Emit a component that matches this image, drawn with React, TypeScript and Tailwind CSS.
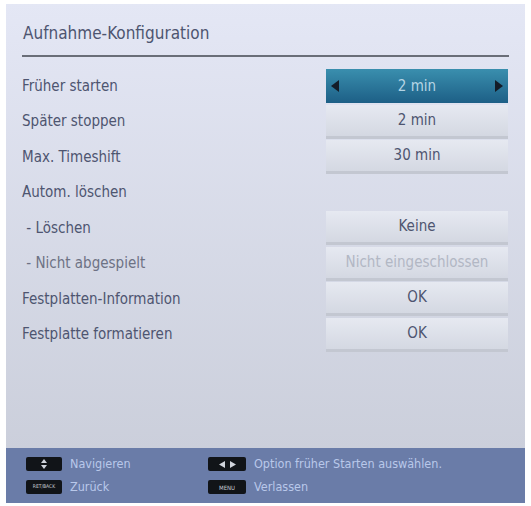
import React from "react";

const font = { fontFamily: '"DejaVu Sans Condensed", "Liberation Sans Narrow", "Liberation Sans", sans-serif' };

function Tri({ dir }: { dir: "l" | "r" }) {
  return (
    <svg width="8" height="12" viewBox="0 0 8 12">
      {dir === "l" ? <polygon points="8,0 0,6 8,12" fill="#141c28" /> : <polygon points="0,0 8,6 0,12" fill="#141c28" />}
    </svg>
  );
}

const rows: { label: string; value?: string; sel?: boolean; dim?: boolean; labelDim?: boolean }[] = [
  { label: "Früher starten", value: "2 min", sel: true },
  { label: "Später stoppen", value: "2 min" },
  { label: "Max. Timeshift", value: "30 min" },
  { label: "Autom. löschen" },
  { label: " - Löschen", value: "Keine" },
  { label: " - Nicht abgespielt", value: "Nicht eingeschlossen", dim: true, labelDim: true },
  { label: "Festplatten-Information", value: "OK" },
  { label: "Festplatte formatieren", value: "OK" },
];

export default function App() {
  return (
    <div className="w-[531px] h-[506px] bg-white pt-[4px] pl-[6px] pr-[6px] pb-[3px]" style={font}>
      <div className="w-full h-full flex flex-col bg-gradient-to-b from-[#e4e7f5] to-[#c8ccd8]">
        <div className="px-[16px] pt-[18px]">
          <div className="text-[17px] leading-[22px] text-[#4e5570] pl-[1px]">Aufnahme-Konfiguration</div>
          <div className="mt-[11px] h-[2px] bg-[#6a6e78]"></div>
        </div>
        <div className="flex flex-col gap-[1.5px] pl-[16px] pr-[17px] pt-[12px]">
          {rows.map((r, i) => (
            <div key={i} className="flex items-center h-[34px]">
              <div className={"flex-1 text-[15px] whitespace-pre " + (r.labelDim ? "text-[#6d7284]" : "text-[#4e5570]")}>{r.label}</div>
              {r.value !== undefined &&
                (r.sel ? (
                  <div className="w-[182px] h-[34px] flex items-center justify-between px-[5px] bg-gradient-to-b from-[#3a8fae] to-[#1d5f86]">
                    <Tri dir="l" />
                    <span className="text-[15px] text-[#b4d4e4]">{r.value}</span>
                    <Tri dir="r" />
                  </div>
                ) : (
                  <div className="w-[182px] h-[34px] flex items-center justify-center bg-gradient-to-b from-[#e6e9f1] to-[#d4d8e2] border-b-[3px] border-[#c3c7d1]">
                    <span className={"text-[15px] " + (r.dim ? "text-[#b2b7c4]" : "text-[#4e5570]")}>{r.value}</span>
                  </div>
                ))}
            </div>
          ))}
        </div>
        <div className="flex-1"></div>
        <div className="h-[55px] bg-[#6a7ca8] flex flex-col justify-center gap-[4px] pl-[20px] text-[12.5px] text-[#b9c8ea]">
          <div className="flex items-center h-[19px]">
            <div className="w-[182px] flex items-center gap-[8px]">
              <div className="w-[36px] h-[14px] rounded-[2px] bg-[#111418] flex flex-col items-center justify-center">
                <svg width="6" height="10" viewBox="0 0 6 10"><polygon points="3,0 6,4 0,4" fill="#d0d4dc" /><polygon points="0,6 6,6 3,10" fill="#d0d4dc" /></svg>
              </div>
              <span>Navigieren</span>
            </div>
            <div className="flex items-center gap-[8px]">
              <div className="w-[38px] h-[14px] rounded-[2px] bg-[#111418] flex items-center justify-center gap-[5px]">
                <svg width="6" height="7" viewBox="0 0 6 7"><polygon points="6,0 0,3.5 6,7" fill="#d0d4dc" /></svg>
                <svg width="6" height="7" viewBox="0 0 6 7"><polygon points="0,0 6,3.5 0,7" fill="#d0d4dc" /></svg>
              </div>
              <span>Option früher Starten auswählen.</span>
            </div>
          </div>
          <div className="flex items-center h-[19px]">
            <div className="w-[182px] flex items-center gap-[8px]">
              <div className="w-[36px] h-[14px] rounded-[2px] bg-[#111418] flex items-center justify-center text-[5px] text-[#c8ccd4]">RET/BACK</div>
              <span>Zurück</span>
            </div>
            <div className="flex items-center gap-[8px]">
              <div className="w-[38px] h-[14px] rounded-[2px] bg-[#111418] flex items-center justify-center text-[6px] text-[#c8ccd4]">MENU</div>
              <span>Verlassen</span>
            </div>
          </div>
        </div>
      </div>
    </div>
  );
}
